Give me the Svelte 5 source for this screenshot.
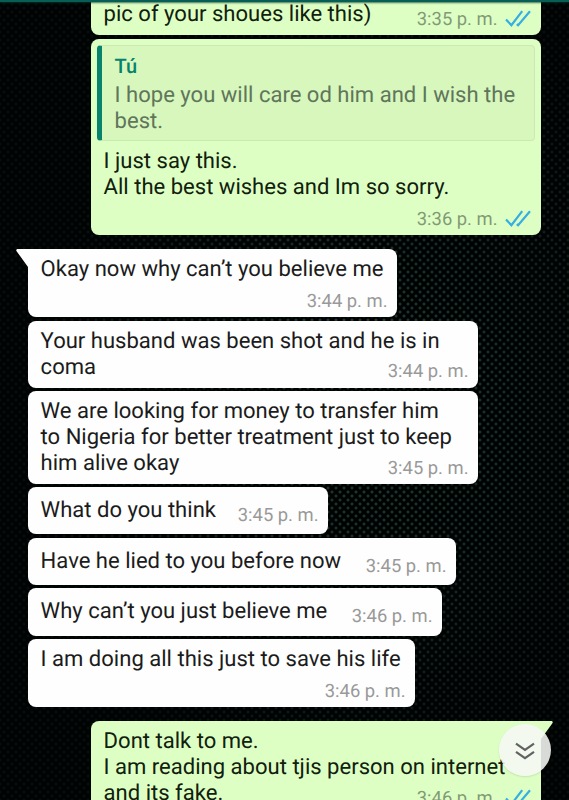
<script>
  const messages = [
    { lines: ['pic of your shoues like this)'], time: '3:35 p. m.', out: true, width: 450, kind: 'clipped' },
    {
      quote: { author: 'Tú', lines: ['I hope you will care od him and I wish the', 'best.'] },
      lines: ['I just say this.', 'All the best wishes and Im so sorry.'],
      time: '3:36 p. m.',
      out: true,
      width: 450,
      kind: 'stacked'
    },
    { lines: ['Okay now why can’t you believe me'], time: '3:44 p. m.', width: 369, kind: 'stacked', tail: true },
    { lines: ['Your husband was been shot and he is in', 'coma'], time: '3:44 p. m.', width: 450 },
    {
      lines: ['We are looking for money to transfer him', 'to Nigeria for better treatment just to keep', 'him alive okay'],
      time: '3:45 p. m.',
      width: 450
    },
    { lines: ['What do you think'], time: '3:45 p. m.', width: 300, kind: 'single' },
    { lines: ['Have he lied to you before now'], time: '3:45 p. m.', width: 428, kind: 'single' },
    { lines: ['Why can’t you just believe me'], time: '3:46 p. m.', width: 414, kind: 'single' },
    { lines: ['I am doing all this just to save his life'], time: '3:46 p. m.', width: 387, kind: 'stacked' },
    {
      lines: ['Dont talk to me.', 'I am reading about tjis person on internet', 'and its fake.'],
      time: '3:46 p. m.',
      out: true,
      width: 450,
      tail: true
    }
  ];
</script>

<div class="screen">
  <div class="chat">
    {#each messages as msg}
      <div class="bubble {msg.kind ?? ''}" class:out={msg.out} class:tail={msg.tail} style="width: {msg.width}px">
        {#if msg.tail}
          <svg class="corner" viewBox="0 0 13 19" width="13" height="19">
            <path d="M13 0H1.8C.4 0-.2 1.2.6 2.2L12 18h1z" fill="currentColor" />
          </svg>
        {/if}
        {#if msg.quote}
          <div class="quote">
            <div class="author">{msg.quote.author}</div>
            {#each msg.quote.lines as line}
              <div class="line">{line}</div>
            {/each}
          </div>
        {/if}
        <div class="text">
          {#each msg.lines as line}
            <div class="line">{line}</div>
          {/each}
        </div>
        <div class="meta">
          <span class="time">{msg.time}</span>
          {#if msg.out}
            <svg class="ticks" viewBox="0 0 26 17" width="26" height="17" fill="none" stroke="#35aee2" stroke-width="2.2">
              <path d="M1 9.5l5.4 5.7L17.2 1.2" />
              <path d="M11.8 14.2l1.3 1.1L25 1.2" />
            </svg>
          {/if}
        </div>
      </div>
    {/each}
  </div>

  <div class="topbar"></div>

  <button class="scroll-down" aria-label="Scroll to latest">
    <svg viewBox="0 0 20 18" width="20" height="18" fill="none" stroke="#626262" stroke-width="2.2">
      <path d="M1 1.6l9 6.4 9-6.4" />
      <path d="M1 9.8l9 6.4 9-6.4" />
    </svg>
  </button>
</div>

<style>
  :global(body) {
    background: #000303;
  }

  .screen {
    position: relative;
    width: 569px;
    height: 800px;
    overflow: hidden;
    font-family: Roboto, sans-serif;
    text-rendering: geometricPrecision;
    background-color: #000303;
    background-image:
      radial-gradient(ellipse 330px 420px at 370px 400px, transparent 15%, rgba(0, 3, 3, 0.8) 100%),
      radial-gradient(circle, #24382d 0.8px, transparent 2px),
      radial-gradient(circle, #24382d 0.8px, transparent 2px);
    background-size: auto, 8px 8px, 8px 8px;
    background-position: 0 0, 0 0, 4px 4px;
  }

  .topbar {
    position: absolute;
    top: 0;
    left: 0;
    right: 0;
    height: 2px;
    background: #075e54;
    box-shadow: 0 1px 2px rgba(0, 60, 50, 0.75);
  }

  .chat {
    display: flex;
    flex-direction: column;
    gap: 3.4px;
    padding: 0 28px;
  }

  .bubble {
    position: relative;
    box-sizing: border-box;
    flex-shrink: 0;
    padding: 7.9px 12.6px 7px;
    border-radius: 8px;
    background: #fefefe;
    color: #1b1b1b;
  }

  .bubble.out {
    align-self: flex-end;
    background: #deffc4;
    color: #10200d;
  }

  .bubble.stacked {
    padding-bottom: 34.5px;
  }

  .bubble.single {
    padding-top: 11px;
    padding-bottom: 10.2px;
  }

  .bubble.clipped {
    margin-top: -20px;
    padding-top: 22.2px;
    padding-bottom: 7px;
  }

  .bubble.tail {
    margin-top: 10.4px;
    border-top-left-radius: 0;
  }

  .bubble.out.tail {
    border-radius: 8px 0 8px 8px;
  }

  .corner {
    position: absolute;
    top: 0;
    left: -12px;
    color: #fefefe;
  }

  .out .corner {
    left: auto;
    right: -12px;
    color: #deffc4;
    transform: scaleX(-1);
  }

  .line {
    font-size: 22.05px;
    line-height: 26px;
    white-space: nowrap;
  }

  .quote {
    margin: -1.6px -6.6px 7.8px;
    padding: 7px 12.6px 5px;
    border: 1px solid #cbe9b2;
    border-left: 5px solid #07826c;
    border-radius: 4px;
    background: #d7f7bd;
    color: #60755a;
  }

  .author {
    margin-bottom: 3px;
    color: #07826c;
    font-size: 20px;
    font-weight: 500;
    line-height: 27px;
  }

  .meta {
    position: absolute;
    right: 9.5px;
    bottom: 4.2px;
    display: flex;
    align-items: center;
    gap: 7px;
    height: 22px;
  }

  .single .meta {
    bottom: 7.2px;
  }

  .time {
    color: #999;
    font-size: 18.4px;
    line-height: 22px;
    white-space: nowrap;
  }

  .out .time {
    color: #829a76;
  }

  .out .meta {
    right: 10.5px;
  }

  .ticks {
    margin-top: -3px;
  }

  .scroll-down {
    position: absolute;
    top: 724px;
    left: 499px;
    width: 52px;
    height: 52px;
    padding: 2px 0 0;
    border: none;
    border-radius: 50%;
    background: rgba(246, 248, 245, 0.88);
    box-shadow: 0 1px 2px rgba(0, 0, 0, 0.12);
    display: flex;
    align-items: center;
    justify-content: center;
  }
</style>
